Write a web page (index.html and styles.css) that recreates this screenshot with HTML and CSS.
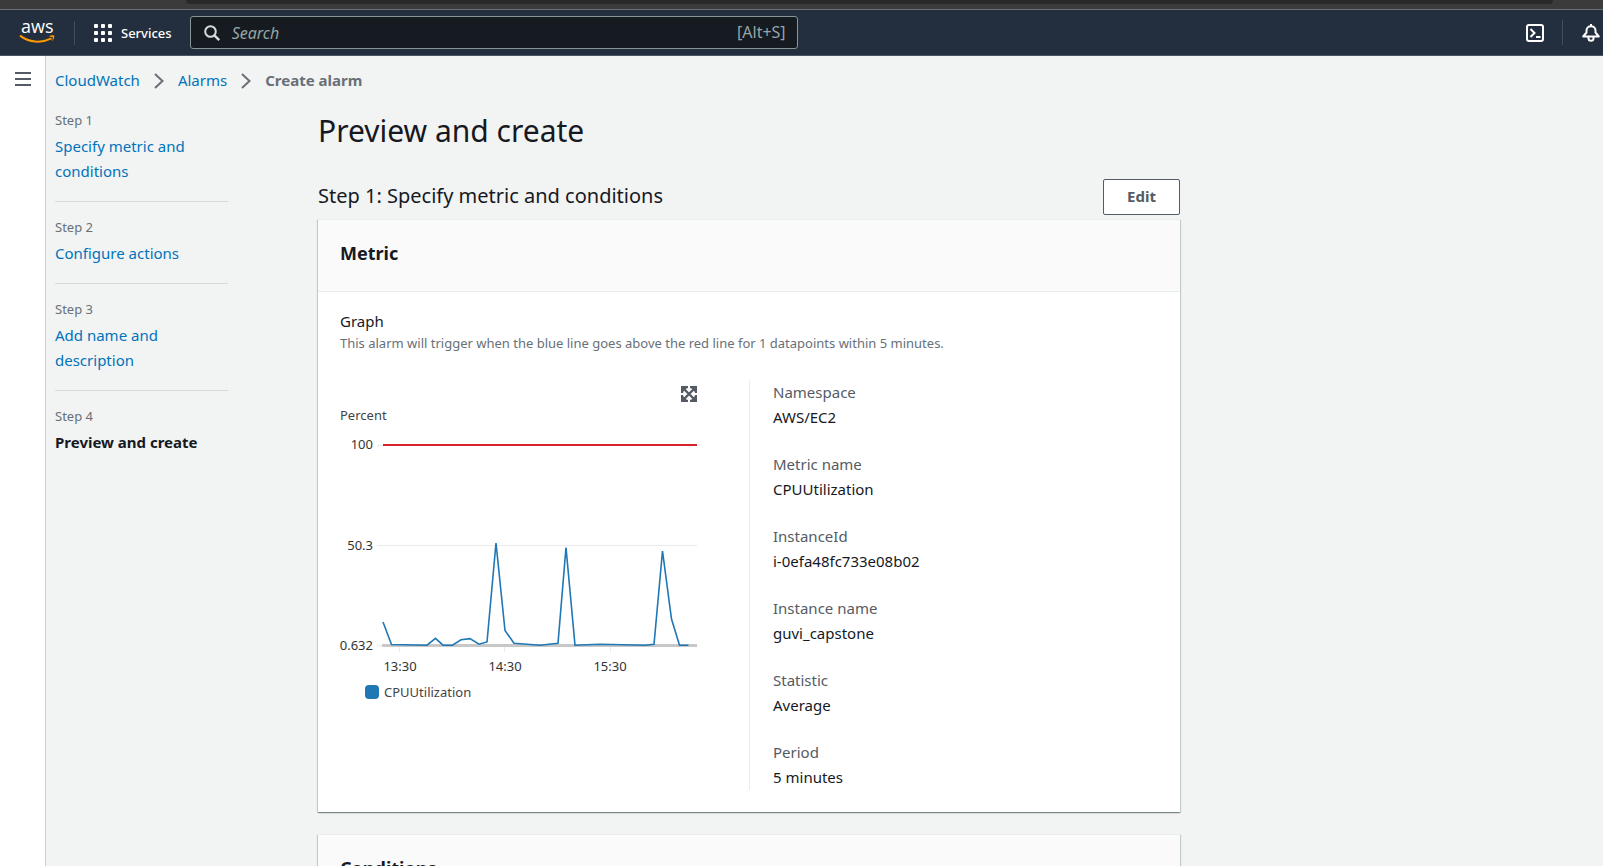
FILE: index.html
```html
<!DOCTYPE html>
<html lang="en">
<head>
<meta charset="utf-8">
<meta name="viewport" content="width=device-width, initial-scale=1">
<title>Create alarm - CloudWatch</title>
<link rel="stylesheet" href="styles.css">
</head>
<body>
<div class="browser-edge"><div class="browser-tab"></div></div>
<header class="topbar">
  <a class="logo" href="#" aria-label="AWS home">
    <svg width="36" height="24" viewBox="0 0 36 24" role="img" aria-label="aws">
      <text class="logo-text" x="1" y="12">aws</text>
      <path d="M0 14.600C9 21.500 21 22.600 31.500 17.400" fill="none" stroke="#f90" stroke-width="2"/>
      <path d="M28.600 15.200c2-1 4.600-1 5.600-.6.500 1.600-.7 4.500-2.200 5.900.4-1.600 1.200-3.700.7-4.300-.7-.6-2.800-.6-4.100-1z" fill="#f90"/>
    </svg>
  </a>
  <button class="services" type="button">
    <svg width="18" height="18" viewBox="0 0 18 18" fill="#fff" aria-hidden="true">
      <rect width="4" height="4" rx="1"/><rect x="7" width="4" height="4" rx="1"/><rect x="14" width="4" height="4" rx="1"/>
      <rect y="7" width="4" height="4" rx="1"/><rect x="7" y="7" width="4" height="4" rx="1"/><rect x="14" y="7" width="4" height="4" rx="1"/>
      <rect y="14" width="4" height="4" rx="1"/><rect x="7" y="14" width="4" height="4" rx="1"/><rect x="14" y="14" width="4" height="4" rx="1"/>
    </svg>
    <span>Services</span>
  </button>
  <label class="search">
    <svg width="16" height="16" viewBox="0 0 16 16" fill="none" stroke="#d5dbdb" stroke-width="2" aria-hidden="true"><circle cx="6.500" cy="6.500" r="5.300"/><path d="M10.400 10.400l4.800 4.800" stroke-width="2.400"/></svg>
    <input type="text" placeholder="Search" aria-label="Search">
    <span class="shortcut">[Alt+S]</span>
  </label>
  <div class="tools">
    <button class="tool shell" type="button" aria-label="CloudShell">
      <svg width="18" height="18" viewBox="0 0 18 18" fill="none" stroke="#fff" stroke-width="2" aria-hidden="true"><rect x="1" y="1" width="16" height="16" rx="2"/><path d="M4.500 5l4 4-4 4M10 13h4.500"/></svg>
    </button>
    <button class="tool bell" type="button" aria-label="Notifications">
      <svg width="18" height="18" viewBox="0 0 18 18" fill="none" stroke="#fff" stroke-width="2" stroke-linejoin="round" aria-hidden="true"><path d="M1.200 12.500L4.500 8.500V6.500C4.500 4 6.500 2.200 9 2.200s4.500 1.800 4.500 4.300v2l3.300 4zM9 0v2.200M6.500 12.800v1.500a2.500 2.500 0 0 0 5 0v-1.500"/></svg>
    </button>
  </div>
</header>
<div class="shell-body">
  <aside class="rail">
    <button class="menu" type="button" aria-label="Open navigation">
      <svg width="16" height="14" viewBox="0 0 16 14" stroke="#545b64" stroke-width="2" aria-hidden="true"><path d="M0 1h16M0 7h16M0 13h16"/></svg>
    </button>
  </aside>
  <div class="page">
    <nav class="crumbs" aria-label="Breadcrumb">
      <a href="#">CloudWatch</a>
      <svg width="10" height="16" viewBox="0 0 10 16" fill="none" stroke="#687078" stroke-width="2" aria-hidden="true"><path d="M1 1l7.500 7L1 15"/></svg>
      <a href="#">Alarms</a>
      <svg width="10" height="16" viewBox="0 0 10 16" fill="none" stroke="#687078" stroke-width="2" aria-hidden="true"><path d="M1 1l7.500 7L1 15"/></svg>
      <span class="here">Create alarm</span>
    </nav>
    <div class="wizard">
      <ol class="steps">
        <li><small>Step 1</small><a href="#">Specify metric and conditions</a></li>
        <li><small>Step 2</small><a href="#">Configure actions</a></li>
        <li><small>Step 3</small><a href="#">Add name and description</a></li>
        <li><small>Step 4</small><strong>Preview and create</strong></li>
      </ol>
      <main class="content">
        <h1>Preview and create</h1>
        <div class="section-head">
          <h2>Step 1: Specify metric and conditions</h2>
          <button class="edit" type="button">Edit</button>
        </div>
        <section class="card">
          <h3>Metric</h3>
          <div class="card-body">
            <div class="graph-label">Graph</div>
            <p class="hint">This alarm will trigger when the blue line goes above the red line for 1 datapoints within 5 minutes.</p>
            <div class="columns">
              <div class="chart">
                <button class="expand" type="button" aria-label="Enlarge graph">
                  <svg width="16" height="16" viewBox="0 0 16 16" aria-hidden="true"><path d="M3 3l10 10M13 3L3 13" stroke="#545b64" stroke-width="2.400"/><path d="M0 0h7v2L5.500 2.500 2.500 5.500 2 7H0zM16 0v7h-2l-.5-1.500-3-3L9 2V0zM0 16V9h2l.5 1.500 3 3L7 14v2zM16 16H9v-2l1.500-.5 3-3L14 9h2z" fill="#545b64"/></svg>
                </button>
                <div class="unit">Percent</div>
                <svg class="plot" width="357" height="250" viewBox="0 0 357 250" role="img" aria-label="CPUUtilization over time">
                  <path d="M37 20.500h320M37 120.500h320M37 220.500h5M59.500 222v5M164.500 222v5M270.500 222v5" stroke="#eaeaea" fill="none"/>
                  <path d="M42 220.500h315" stroke="#c8c8c8" stroke-width="3"/>
                  <path d="M43 20h314" stroke="#d6222a" stroke-width="2"/>
                  <polyline fill="none" stroke="#1f77b4" stroke-width="1.600" points="43,197 51.500,219.500 87,220.200 95.500,213.300 103,220.200 112.500,220.200 121,214.800 130,213.600 139,219.200 147,217 156,118 165,205.500 174,218.200 200,220.200 218,218.300 226,122.500 235,220.200 260,219.200 305,220.200 314,219.200 322.500,126 331.500,194 339.500,220.200 348.500,220.200"/>
                  <g class="axis" text-anchor="end"><text x="33" y="24">100</text><text x="33" y="125">50.3</text><text x="33" y="225">0.632</text></g>
                  <g class="axis" text-anchor="middle"><text x="60" y="246">13:30</text><text x="165" y="246">14:30</text><text x="270" y="246">15:30</text></g>
                </svg>
                <div class="legend"><span class="swatch"></span>CPUUtilization</div>
              </div>
              <dl class="facts">
                <div><dt>Namespace</dt><dd>AWS/EC2</dd></div>
                <div><dt>Metric name</dt><dd>CPUUtilization</dd></div>
                <div><dt>InstanceId</dt><dd>i-0efa48fc733e08b02</dd></div>
                <div><dt>Instance name</dt><dd>guvi_capstone</dd></div>
                <div><dt>Statistic</dt><dd>Average</dd></div>
                <div><dt>Period</dt><dd>5 minutes</dd></div>
              </dl>
            </div>
          </div>
        </section>
        <section class="card">
          <h3>Conditions</h3>
        </section>
      </main>
    </div>
  </div>
</div>
</body>
</html>
```
FILE: styles.css
```css
* { box-sizing: border-box; }
html, body { height: 100%; }
body {
  margin: 0;
  display: flex;
  flex-direction: column;
  background: #f2f3f3;
  color: #16191f;
  font: 15px/25px "Noto Sans", "Open Sans", sans-serif;
}
a { color: #0073bb; text-decoration: none; }
button { font: inherit; cursor: pointer; }
svg { display: block; flex: none; overflow: visible; }
h1, h2, h3, p, ol, dl, dd { margin: 0; padding: 0; }

.browser-edge { flex: none; height: 10px; padding: 0 50px 0 186px; background: #3b3b3b; border-bottom: 1px solid #6b6f74; }
.browser-tab { height: 4px; background: #292929; border-radius: 0 0 10px 10px; }

.topbar {
  flex: none;
  height: 46px;
  display: flex;
  align-items: center;
  background: #232f3e;
  border-bottom: 1px solid #4a5563;
  color: #fff;
}
.logo { padding: 0 18px 0 20px; border-right: 1px solid #414d5c; }
.logo-text { fill: #fff; font: 500 18px "Open Sans", sans-serif; }
.services { display: flex; align-items: center; gap: 9px; padding: 0 18px 0 19px; border: 0; background: none; color: #fff; font-size: 13px; font-weight: 500; line-height: 24px; }
.search {
  width: 608px;
  height: 33px;
  display: flex;
  align-items: center;
  gap: 12px;
  padding: 0 11px 0 13px;
  background: #161a21;
  border: 1px solid #879596;
  border-radius: 3px;
}
.search input { flex: 1; min-width: 0; padding: 0; border: 0; outline: 0; background: none; color: #fff; font: 16px "Noto Sans", sans-serif; }
.search input::placeholder { color: #95a5a6; opacity: 1; font-style: italic; }
.shortcut { color: #95a5a6; font-size: 16px; }
.tools { margin-left: auto; display: flex; }
.tool { height: 25px; display: flex; align-items: center; border: 0; background: none; }
.shell { padding: 0 18px; border-right: 1px solid #414d5c; }
.bell { padding: 0 3px 0 19px; }

.shell-body { flex: 1; min-height: 0; display: flex; }
.rail { flex: none; width: 46px; background: #fff; border-right: 1px solid #ccd1d1; }
.menu { display: block; margin: 16px 0 0 15px; padding: 0; border: 0; background: none; }
.page { flex: 1; min-width: 0; padding: 12px 9px 0; overflow-y: auto; scrollbar-width: none; }

.crumbs { display: flex; align-items: center; gap: 14px; }
.here { color: #687078; font-weight: 700; }

.wizard { display: grid; grid-template-columns: 173px minmax(0, 1fr); column-gap: 90px; max-width: 1125px; }
.steps { list-style: none; padding-top: 15px; }
.steps li { padding-bottom: 17px; margin-bottom: 13px; border-bottom: 1px solid #d5dbdb; }
.steps li:last-child { border: 0; }
.steps small, .steps a, .steps strong { display: block; }
.steps small { margin-bottom: 2px; color: #687078; font-size: 13px; line-height: 24px; }

.content { padding-top: 20px; }
h1 { font-size: 30px; font-weight: 400; line-height: 36px; }
.section-head { display: flex; justify-content: space-between; align-items: flex-start; margin: 30px 0 4px; }
h2 { font-size: 20px; font-weight: 400; line-height: 34px; }
.edit { height: 36px; padding: 0 23px 2px; background: #fff; border: 1px solid #545b64; border-radius: 2px; color: #545b64; font-weight: 700; line-height: 24px; }

.card { margin-bottom: 22px; background: #fff; border-top: 1px solid #eaeded; box-shadow: 0 1px 1px 0 rgba(0, 28, 36, .3), 1px 1px 1px 0 rgba(0, 28, 36, .15), -1px 1px 1px 0 rgba(0, 28, 36, .15); }
h3 { padding: 18px 22px 22px; background: #fafafa; border-bottom: 1px solid #eaeded; font-size: 18px; font-weight: 700; line-height: 31px; }
.card-body { padding: 17px 22px 22px; }
.graph-label { line-height: 24px; }
.hint { color: #687078; font-size: 13px; line-height: 20px; }
.columns { display: grid; grid-template-columns: 1fr 1fr; margin-top: 27px; }
.chart { display: flex; flex-direction: column; width: 357px; padding-top: 6px; font-size: 13px; color: #444; }
.expand { align-self: flex-end; padding: 0; border: 0; background: none; }
.unit { padding-top: 3px; line-height: 20px; }
.axis { fill: #333; font: 13px "Noto Sans", sans-serif; }
.legend { display: flex; align-items: center; gap: 5px; margin-top: 5px; padding-left: 25px; line-height: 24px; }
.swatch { width: 14px; height: 14px; border-radius: 4px; background: #1f77b4; }
.facts { display: grid; row-gap: 22px; padding-left: 23px; border-left: 1px solid #eaeded; }
.facts dt { color: #545b64; }
```
